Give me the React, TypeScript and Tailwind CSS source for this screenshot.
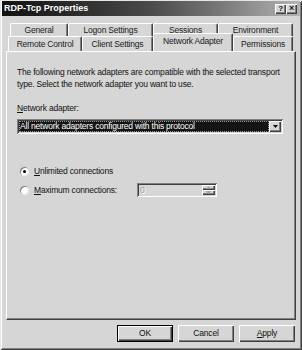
import { ReactNode } from 'react'

// classic win2k-style property sheet, grayscale
const raised =
  'shadow-[inset_1px_1px_0_#ffffff,inset_-1px_-1px_0_#404040,inset_-2px_-2px_0_#808080]'
const sunken =
  'shadow-[inset_1px_1px_0_#808080,inset_-1px_-1px_0_#ffffff,inset_2px_2px_0_#404040,inset_-2px_-2px_0_#d6d6d6]'

function Tab({ label, w, selected = false }: { label: string; w: string; selected?: boolean }) {
  return (
    <div
      className={`${w} ${
        selected
          ? 'relative z-10 -mt-[3px] h-[18px] pb-[3px] bg-[#d6d6d6]'
          : 'h-full'
      } flex items-center justify-center rounded-t-[2px] border-l border-t border-l-white border-t-white border-r border-r-[#404040] shadow-[inset_-1px_0_0_#808080]`}
    >
      {label}
    </div>
  )
}

function Radio({ checked, children }: { checked?: boolean; children: ReactNode }) {
  return (
    <div className="flex items-center gap-[5px]">
      <div className="w-[9px] h-[9px] rounded-full bg-white shadow-[inset_1px_1px_0_#808080,inset_-1px_-1px_0_#e8e8e8] flex items-center justify-center">
        {checked && <div className="w-[3px] h-[3px] rounded-full bg-black" />}
      </div>
      <span>{children}</span>
    </div>
  )
}

function Button({ children, isDefault = false }: { children: ReactNode; isDefault?: boolean }) {
  return (
    <div
      className={`w-[56px] h-[17px] flex items-center justify-center bg-[#d6d6d6] ${
        isDefault ? 'border border-black ' : ''
      }${raised}`}
    >
      {children}
    </div>
  )
}

export default function App() {
  return (
    <div className="w-[302px] h-[350px] bg-[#d6d6d6] pt-[1px] px-[2px] text-[#111] text-[8.5px] tracking-[-0.2px] font-['Liberation_Sans',Arial,sans-serif] shadow-[inset_1px_1px_0_#e6e6e6,inset_-1px_-1px_0_#404040,inset_2px_2px_0_#ffffff,inset_-2px_-2px_0_#808080]">
      {/* Title bar */}
      <div className="h-[15px] flex items-center justify-between pl-[2px] pr-[3px] bg-gradient-to-r from-[#121212] via-[#4a4a4a] to-[#b4b4b4]">
        <span className="text-white font-bold text-[9px] tracking-normal">RDP-Tcp Properties</span>
        <div className="flex">
          <div className={`w-[11px] h-[10px] bg-[#d6d6d6] ${raised} flex items-center justify-center text-[8px] font-bold leading-none`}>?</div>
          <div className={`w-[11px] h-[10px] bg-[#d6d6d6] ${raised} flex items-center justify-center text-[9px] font-bold leading-none`}>×</div>
        </div>
      </div>

      {/* Tabs */}
      <div className="mt-[7px] h-[13px] flex ml-[8px] text-[#1a1a1a]">
        <Tab label="General" w="w-[58px]" />
        <Tab label="Logon Settings" w="w-[85px]" />
        <Tab label="Sessions" w="w-[65px]" />
        <Tab label="Environment" w="w-[75px]" />
      </div>
      <div className="h-[15px] flex ml-[6px] text-[#1a1a1a]">
        <Tab label="Remote Control" w="w-[74px]" />
        <Tab label="Client Settings" w="w-[71px]" />
        <Tab label="Network Adapter" w="w-[80px]" selected />
        <Tab label="Permissions" w="w-[60px]" />
      </div>

      {/* Panel */}
      <div className="ml-[4px] w-[290px] h-[269px] border-t border-l border-white border-r border-b border-r-[#404040] border-b-[#404040] shadow-[inset_-1px_-1px_0_#808080] pt-[14px] pl-[10px] pr-[12px]">
        <p className="leading-[12px]">
          The following network adapters are compatible with the selected transport type. Select the network adapter you want to use.
        </p>
        <div className="mt-[12px] leading-[12px]">
          <span className="underline">N</span>etwork adapter:
        </div>
        <div className={`mt-[5px] h-[15px] w-[266px] bg-white ${sunken} flex items-center p-[2px]`}>
          <div className="flex-1 h-[11px] bg-[#141414] text-white flex items-center pl-[1px] outline outline-1 outline-dotted outline-[#9a9a9a] -outline-offset-1">
            All network adapters configured with this protocol
          </div>
          <div className={`w-[12px] h-[11px] bg-[#d6d6d6] ${raised} flex items-center justify-center`}>
            <svg width="5" height="3" viewBox="0 0 5 3">
              <path d="M0 0h5L2.5 3z" fill="#000" />
            </svg>
          </div>
        </div>

        <div className="mt-[31px] pl-[3px] flex flex-col gap-[6px] leading-[12px]">
          <Radio checked>
            <span className="underline">U</span>nlimited connections
          </Radio>
          <div className="flex items-center">
            <div className="w-[117px]">
              <Radio>
                <span className="underline">M</span>aximum connections:
              </Radio>
            </div>
            <div className={`w-[80px] h-[14px] ${sunken} flex items-center p-[2px]`}>
              <span className="flex-1 pl-[1px] text-[#a0a0a0] [text-shadow:1px_1px_0_#fff]">0</span>
              <div className="flex flex-col w-[13px] h-[10px]">
                <div className={`flex-1 ${raised} flex items-center justify-center`}>
                  <svg width="5" height="3" viewBox="0 0 5 3">
                    <path d="M2.5 0L5 3H0z" fill="#a0a0a0" />
                  </svg>
                </div>
                <div className={`flex-1 ${raised} flex items-center justify-center`}>
                  <svg width="5" height="3" viewBox="0 0 5 3">
                    <path d="M0 0h5L2.5 3z" fill="#a0a0a0" />
                  </svg>
                </div>
              </div>
            </div>
          </div>
        </div>
      </div>

      {/* Buttons */}
      <div className="mt-[5px] flex justify-end gap-[5px] pr-[5px]">
        <Button isDefault>OK</Button>
        <Button>Cancel</Button>
        <Button>
          <span><span className="underline">A</span>pply</span>
        </Button>
      </div>
    </div>
  )
}
